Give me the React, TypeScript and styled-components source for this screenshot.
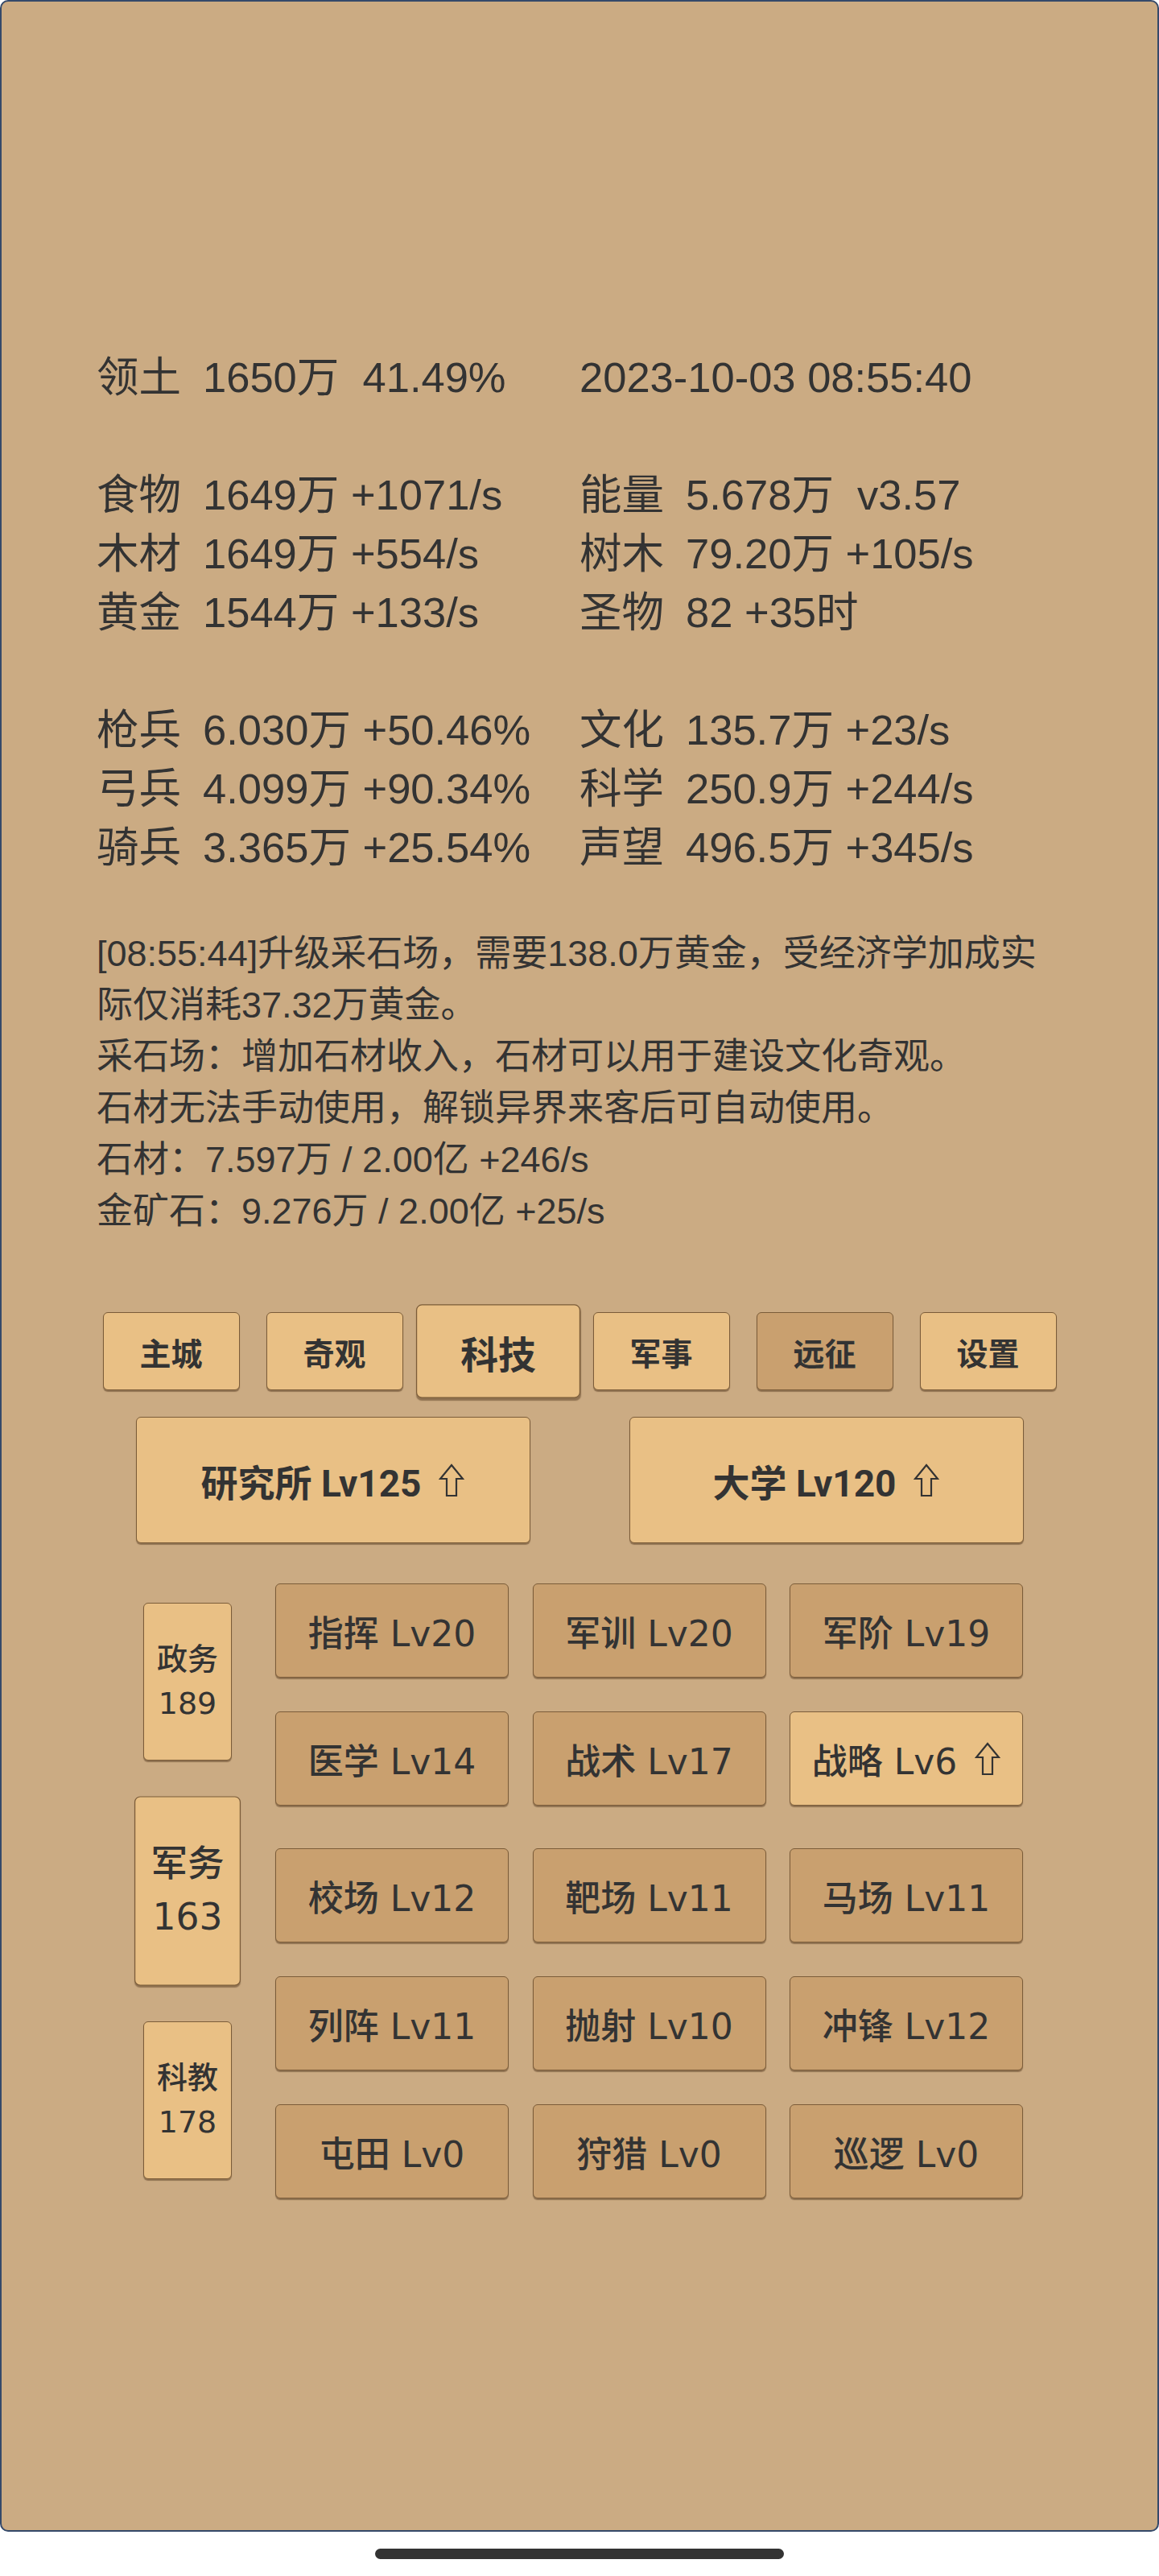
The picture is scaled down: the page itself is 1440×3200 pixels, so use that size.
import styled, { createGlobalStyle, css } from "styled-components";

const GlobalStyle = createGlobalStyle`
  html, body {
    margin: 0;
    padding: 0;
    background: #ffffff;
  }
  * {
    box-sizing: border-box;
  }
`;

const LIGHT = "#e9c085";
const DARK = "#c9a06f";
const INK = "#333333";

const statRows = [
    [
        { label: "领土", value: "1650万  41.49%" },
        { label: "", value: "2023-10-03 08:55:40" },
    ],
    null,
    [
        { label: "食物", value: "1649万 +1071/s" },
        { label: "能量", value: "5.678万  v3.57" },
    ],
    [
        { label: "木材", value: "1649万 +554/s" },
        { label: "树木", value: "79.20万 +105/s" },
    ],
    [
        { label: "黄金", value: "1544万 +133/s" },
        { label: "圣物", value: "82 +35时" },
    ],
    null,
    [
        { label: "枪兵", value: "6.030万 +50.46%" },
        { label: "文化", value: "135.7万 +23/s" },
    ],
    [
        { label: "弓兵", value: "4.099万 +90.34%" },
        { label: "科学", value: "250.9万 +244/s" },
    ],
    [
        { label: "骑兵", value: "3.365万 +25.54%" },
        { label: "声望", value: "496.5万 +345/s" },
    ],
];

const tabs = [
    { name: "主城" },
    { name: "奇观" },
    { name: "科技", active: true },
    { name: "军事" },
    { name: "远征", dim: true },
    { name: "设置" },
];

const categories = [
    { name: "政务", count: 189 },
    { name: "军务", count: 163, active: true },
    { name: "科教", count: 178 },
];

const techGroups = [
    [
        { name: "指挥", lv: 20 },
        { name: "军训", lv: 20 },
        { name: "军阶", lv: 19 },
        { name: "医学", lv: 14 },
        { name: "战术", lv: 17 },
        { name: "战略", lv: 6, up: true },
    ],
    [
        { name: "校场", lv: 12 },
        { name: "靶场", lv: 11 },
        { name: "马场", lv: 11 },
        { name: "列阵", lv: 11 },
        { name: "抛射", lv: 10 },
        { name: "冲锋", lv: 12 },
        { name: "屯田", lv: 0 },
        { name: "狩猎", lv: 0 },
        { name: "巡逻", lv: 0 },
    ],
];

function UpArrow() {
    return (
        <ArrowSvg viewBox="0 0 32 42" width="32" height="42">
            <path
                d="M16 2 L30 19 L22 19 L22 40 L10 40 L10 19 L2 19 Z"
                fill="none"
                stroke={INK}
                strokeWidth="2.2"
                strokeLinejoin="miter"
            />
        </ArrowSvg>
    );
}

function App() {
    return (
        <>
            <GlobalStyle />
            <Screen>
                <Panel>
                    <Stats>
                        {statRows.map((row, i) =>
                            row ? (
                                <StatRow key={i}>
                                    {row.map((s, j) => (
                                        <Stat key={j}>
                                            {s.label && <Label>{s.label}</Label>}
                                            <span>{s.value}</span>
                                        </Stat>
                                    ))}
                                </StatRow>
                            ) : (
                                <BlankRow key={i} />
                            )
                        )}
                    </Stats>

                    <Log>
                        <p>
                            [08:55:44]升级采石场，需要138.0万黄金，受经济学加成实际仅消耗37.32万黄金。
                        </p>
                        <p>采石场：增加石材收入，石材可以用于建设文化奇观。</p>
                        <p>石材无法手动使用，解锁异界来客后可自动使用。</p>
                        <p>石材：7.597万 / 2.00亿 +246/s</p>
                        <p>金矿石：9.276万 / 2.00亿 +25/s</p>
                    </Log>

                    <TabBar>
                        {tabs.map((t) => (
                            <Tab key={t.name} $active={t.active} $dim={t.dim}>
                                {t.name}
                            </Tab>
                        ))}
                    </TabBar>

                    <BuildingRow>
                        <BuildingButton>
                            研究所 Lv125
                            <UpArrow />
                        </BuildingButton>
                        <BuildingButton>
                            大学 Lv120
                            <UpArrow />
                        </BuildingButton>
                    </BuildingRow>

                    <TechArea>
                        <SideColumn>
                            {categories.map((c) => (
                                <CategoryButton key={c.name} $active={c.active}>
                                    <span>{c.name}</span>
                                    <span>{c.count}</span>
                                </CategoryButton>
                            ))}
                        </SideColumn>
                        <TechList>
                            {techGroups.map((group, gi) => (
                                <TechGrid key={gi}>
                                    {group.map((t) => (
                                        <TechButton key={t.name} $up={t.up}>
                                            {t.name} Lv{t.lv}
                                            {t.up && <UpArrow />}
                                        </TechButton>
                                    ))}
                                </TechGrid>
                            ))}
                        </TechList>
                    </TechArea>
                </Panel>
                <HomeArea>
                    <HomeBar />
                </HomeArea>
            </Screen>
        </>
    );
}

const Screen = styled.div`
    width: 1440px;
    height: 3200px;
    display: flex;
    flex-direction: column;
    background: #ffffff;
`;

const Panel = styled.main`
    height: 3145px;
    flex: none;
    background: #cbab83;
    border: 2px solid #34496a;
    border-radius: 10px;
    padding-top: 430px;
    color: ${INK};
    font-family: "Liberation Sans", "Noto Sans CJK SC", sans-serif;
    overflow: hidden;
`;

const Stats = styled.section`
    padding: 0 118px;
    font-size: 52.5px;
    line-height: 73px;
`;

const StatRow = styled.div`
    display: grid;
    grid-template-columns: 600px 600px;
`;

const BlankRow = styled.div`
    height: 73px;
`;

const Stat = styled.div`
    display: flex;
    gap: 27px;
    white-space: pre;
`;

const Label = styled.span`
    flex: none;
`;

const Log = styled.section`
    margin-top: 64px;
    padding: 0 118px;
    font-size: 45px;
    line-height: 64px;

    p {
        margin: 0;
    }
`;

const raised = css`
    border: 1px solid #7b5c39;
    border-radius: 6px;
    box-shadow: 0 2px 1px rgba(70, 45, 20, 0.45);
    color: ${INK};
    display: flex;
    align-items: center;
    justify-content: center;
    padding: 0;
    cursor: pointer;
`;

const TabBar = styled.nav`
    margin-top: 93px;
    display: flex;
    justify-content: center;
    gap: 33px;
`;

const Tab = styled.button<{ $active?: boolean; $dim?: boolean }>`
    ${raised};
    width: 170px;
    height: 97px;
    background: ${(p) => (p.$dim ? DARK : LIGHT)};
    font-family: Roboto, "Noto Sans CJK SC", sans-serif;
    font-size: 39px;
    font-weight: 700;
    transform: ${(p) => (p.$active ? "scale(1.2)" : "none")};
`;

const BuildingRow = styled.div`
    margin-top: 33px;
    display: flex;
    justify-content: center;
    gap: 123px;
`;

const BuildingButton = styled.button`
    ${raised};
    width: 490px;
    height: 157px;
    background: ${LIGHT};
    font-family: Roboto, "Noto Sans CJK SC", sans-serif;
    font-size: 46px;
    font-weight: 700;
    gap: 22px;
`;

const ArrowSvg = styled.svg`
    display: block;
    flex: none;
`;

const TechArea = styled.section`
    margin-top: 50px;
    padding-left: 176px;
    display: flex;
    align-items: center;
    gap: 54px;
`;

const SideColumn = styled.div`
    display: flex;
    flex-direction: column;
    gap: 64px;
`;

const CategoryButton = styled.button<{ $active?: boolean }>`
    ${raised};
    width: 110px;
    height: 196px;
    flex-direction: column;
    background: ${LIGHT};
    font-family: "DejaVu Sans", "Noto Sans CJK SC", sans-serif;
    font-size: 38px;
    font-weight: 500;
    line-height: 55px;
    transform: ${(p) => (p.$active ? "scale(1.2)" : "none")};
`;

const TechList = styled.div`
    display: flex;
    flex-direction: column;
    gap: 53px;
`;

const TechGrid = styled.div`
    display: grid;
    grid-template-columns: repeat(3, 290px);
    column-gap: 29.5px;
    row-gap: 42px;
`;

const TechButton = styled.button<{ $up?: boolean }>`
    ${raised};
    height: 117px;
    background: ${(p) => (p.$up ? LIGHT : DARK)};
    font-family: "DejaVu Sans", "Noto Sans CJK SC", sans-serif;
    font-size: 44px;
    font-weight: 500;
    gap: 22px;
    white-space: pre;
`;

const HomeArea = styled.div`
    flex: 1;
    display: flex;
    justify-content: center;
    padding-top: 21px;
`;

const HomeBar = styled.div`
    width: 508px;
    height: 13px;
    border-radius: 7px;
    background: #333333;
`;

export default App;
